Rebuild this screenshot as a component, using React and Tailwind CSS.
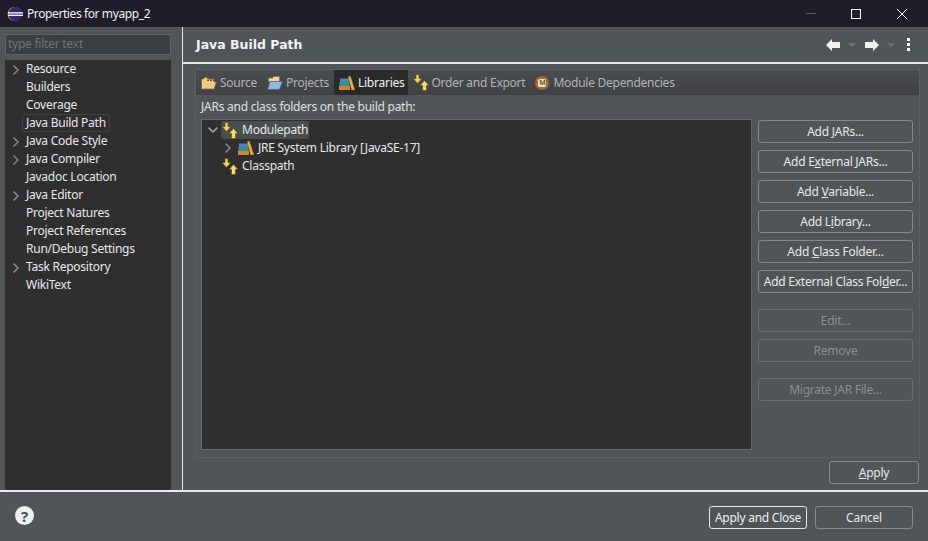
import { ChevronRight, ChevronDown } from "lucide-react";

const treeItems = [
  { label: "Resource", arrow: true },
  { label: "Builders" },
  { label: "Coverage" },
  { label: "Java Build Path", selected: true },
  { label: "Java Code Style", arrow: true },
  { label: "Java Compiler", arrow: true },
  { label: "Javadoc Location" },
  { label: "Java Editor", arrow: true },
  { label: "Project Natures" },
  { label: "Project References" },
  { label: "Run/Debug Settings" },
  { label: "Task Repository", arrow: true },
  { label: "WikiText" },
];

function EclipseLogo() {
  return (
    <svg width="16" height="16" viewBox="0 0 16 16">
      <circle cx="7.5" cy="8" r="7" fill="#e8922a" />
      <circle cx="8.5" cy="8" r="7" fill="#2f2a6b" />
      <rect x="1" y="6.200" width="15" height="1.400" fill="#f2f0f5" />
      <rect x="1" y="8.600" width="15" height="1.400" fill="#f2f0f5" />
    </svg>
  );
}

function PathIcon() {
  return (
    <svg width="16" height="17" viewBox="0 0 16 17" className="shrink-0">
      <path d="M3 .5h3v4h3L4.500 9.500 0 4.500h3z" fill="#f7cf5f" stroke="#5e4a18" strokeWidth="0.7" />
      <path d="M9.500 16.500v-5H7L11.500 6.500 16 11.500h-2.500v5z" fill="#fbd96d" stroke="#5e4a18" strokeWidth="0.7" />
    </svg>
  );
}

function LibraryIcon() {
  return (
    <svg width="16" height="16" viewBox="0 0 16 16" className="shrink-0">
      <rect x="0" y="11" width="11" height="4" fill="#d0843a" />
      <rect x="0.500" y="7" width="10" height="4" fill="#2f9490" />
      <rect x="1" y="3.500" width="9" height="3.500" fill="#5a7fb4" />
      <path d="M9 1.500l2.500-.5L16 15h-3.500z" fill="#e6b53e" stroke="#5e4a18" strokeWidth="0.4" />
    </svg>
  );
}

function SourceIcon() {
  return (
    <svg width="16" height="16" viewBox="0 0 16 16" className="shrink-0">
      <path d="M.500 14V4h2l1-1.500h3L7.500 4H13v3h2.500L13 14z" fill="#edcd86" stroke="#7f6430" strokeWidth="0.7" />
      <path d="M6 2h2v1.500H6zM9 2h2v1.500H9zM12 2h2v1.500h-2zM6 4.500h2V6H6zM9 4.500h2V6H9zM12 4.500h2V6h-2z" fill="#5f5136" />
    </svg>
  );
}

function ProjectIcon() {
  return (
    <svg width="16" height="16" viewBox="0 0 16 16" className="shrink-0">
      <path d="M1.500 7V3h4l1-1.500h6V7z" fill="#f1d68f" stroke="#7f6430" strokeWidth="0.7" />
      <path d="M.500 14.500l2.500-8h12.500l-3 8z" fill="#8fb8e4" stroke="#3f5f8c" strokeWidth="0.7" />
    </svg>
  );
}

function MavenIcon() {
  return (
    <span className="flex w-[16px] shrink-0 justify-center">
      <span className="flex h-[14px] w-[14px] items-center justify-center rounded-full bg-[#a8682c]">
        <span className="flex h-[8px] w-[8px] items-center justify-center rounded-[2px] bg-[#f4ead8] text-[7px] font-bold leading-none text-[#7d4a1c]">M</span>
      </span>
    </span>
  );
}

function Tab({ icon, label, active, className = "pr-[5px]" }) {
  return (
    <div className={`flex h-[25px] items-center gap-[3px] pl-[5px] ${className} ${active ? "bg-[#2a2a2a] text-[#f2f2f2]" : "text-[#b0b4b8]"}`}>
      {icon}
      <span>{label}</span>
    </div>
  );
}

function Btn({ children, disabled, strong, className = "" }) {
  const tone = disabled
    ? "border-[#6a6e71] text-[#8b8f92]"
    : strong
      ? "border-[#e4e6e8] text-[#eef0f2]"
      : "border-[#85898c] text-[#e6e8ea]";
  return (
    <div className={`flex h-[23px] items-center justify-center whitespace-nowrap rounded-[3px] border ${tone} ${className}`}>
      <span>{children}</span>
    </div>
  );
}

export default function App() {
  return (
    <div
      className="flex h-[541px] w-[928px] flex-col overflow-hidden bg-[#505558] text-[12px] leading-[18px] tracking-[-0.25px] text-[#e6e8ea]"
      style={{ fontFamily: '"Noto Sans", "Open Sans", sans-serif' }}
    >
      {/* Title bar */}
      <div className="flex h-[27px] shrink-0 items-center bg-[#1f1d29] pl-[7px] pr-[21px]">
        <EclipseLogo />
        <span className="ml-[4px] flex-1 tracking-[-0.4px] text-[#f0f0f0]">Properties for myapp_2</span>
        <div className="mr-[35px] h-px w-[10px] bg-[#5a5a62]" />
        <div className="mr-[36px] h-[10px] w-[10px] border border-white" />
        <svg width="10" height="10" viewBox="0 0 10 10">
          <path d="M0 0L10 10M10 0L0 10" stroke="#fff" strokeWidth="1" />
        </svg>
      </div>

      <div className="flex h-[463px] shrink-0">
        {/* Left pane */}
        <div className="flex w-[182px] shrink-0 flex-col pl-[5px] pt-[7px]">
          <div className="flex h-[21px] w-[166px] items-center border border-[#5f6366] bg-[#3b3e40] pb-[2px] pl-[2px] text-[#6f7376]">
            type filter text
          </div>
          <div className="mt-[5px] w-[166px] flex-1 bg-[#2f2f2f]">
            {treeItems.map((item) => (
              <div key={item.label} className="flex h-[18px] items-center">
                <span className="flex w-[21px] justify-center">
                  {item.arrow && <ChevronRight size={16} strokeWidth={2.4} className="mt-[2px] text-[#85888a]" />}
                </span>
                <span className={item.selected ? "-ml-[4px] rounded-[2px] border border-[#3f4244] pl-[3px] pr-[3px] leading-[16px]" : ""}>
                  {item.label}
                </span>
              </div>
            ))}
          </div>
        </div>
        <div className="w-px shrink-0 bg-[#e8e8e8]" />

        {/* Right pane */}
        <div className="flex min-w-0 flex-1 flex-col">
          <div className="flex h-[35px] shrink-0 items-center justify-between pl-[13px] pr-[18px]">
            <span className="text-[12.5px] font-bold tracking-normal text-[#f0f2f4]" style={{ fontFamily: '"DejaVu Sans", sans-serif' }}>
              Java Build Path
            </span>
            <div className="flex items-center">
              <svg width="14" height="12" viewBox="0 0 14 12"><path d="M0 6L6 0v3h8v6H6v3z" fill="#f2f2f2" /></svg>
              <svg width="8" height="4" viewBox="0 0 8 4" className="ml-[8px]"><path d="M0 0h8L4 4z" fill="#6d7174" /></svg>
              <svg width="14" height="12" viewBox="0 0 14 12" className="ml-[9px]"><path d="M14 6L8 0v3H0v6h8v3z" fill="#f2f2f2" /></svg>
              <svg width="8" height="4" viewBox="0 0 8 4" className="ml-[8px]"><path d="M0 0h8L4 4z" fill="#6d7174" /></svg>
              <div className="ml-[12px] flex flex-col gap-[2px]">
                <span className="h-[3px] w-[3px] bg-white" />
                <span className="h-[3px] w-[3px] bg-white" />
                <span className="h-[3px] w-[3px] bg-white" />
              </div>
            </div>
          </div>
          <div className="h-[2px] shrink-0 bg-[#e8e8e8]" />

          {/* Tab folder */}
          <div className="ml-[12px] mr-[8px] mt-[5px] flex h-[389px] shrink-0 flex-col border border-[#5c6063]">
            <div className="flex h-[25px] shrink-0 items-center bg-gradient-to-b from-[#4a4d50] to-[#3f4144]">
              <Tab icon={<SourceIcon />} label="Source" />
              <Tab icon={<ProjectIcon />} label="Projects" />
              <Tab icon={<LibraryIcon />} label="Libraries" active className="pr-[3px]" />
              <Tab icon={<PathIcon />} label="Order and Export" className="pr-[4px]" />
              <Tab icon={<MavenIcon />} label="Module Dependencies" />
            </div>
            <div className="flex min-h-0 flex-1 flex-col px-[5px]">
              <div className="flex h-[24px] shrink-0 items-center text-[#dfe1e3]">JARs and class folders on the build path:</div>
              <div className="flex gap-[6px]">
                <div className="h-[331px] w-[551px] shrink-0 border border-[#63676a] bg-[#2f2f2f] pt-[1px]">
                  <div className="flex h-[18px] items-center pl-[3px]">
                    <ChevronDown size={16} strokeWidth={2.4} className="text-[#a8abad]" />
                    <div className="flex h-[18px] items-center gap-[4px] rounded-[2px] bg-[#4a4d4f] pl-[1px] pr-[1px]">
                      <PathIcon />
                      <span>Modulepath</span>
                    </div>
                  </div>
                  <div className="flex h-[18px] items-center pl-[18px]">
                    <ChevronRight size={16} strokeWidth={2.4} className="text-[#85888a]" />
                    <span className="ml-[2px]"><LibraryIcon /></span>
                    <span className="ml-[4px]">JRE System Library [JavaSE-17]</span>
                  </div>
                  <div className="flex h-[18px] items-center gap-[4px] pl-[20px]">
                    <PathIcon />
                    <span>Classpath</span>
                  </div>
                </div>

                <div className="flex w-[155px] shrink-0 flex-col pt-[1px]">
                  <div className="flex flex-col gap-[7px]">
                    <Btn>Add <u>J</u>ARs...</Btn>
                    <Btn>Add E<u>x</u>ternal JARs...</Btn>
                    <Btn>Add <u>V</u>ariable...</Btn>
                    <Btn>Add L<u>i</u>brary...</Btn>
                    <Btn>Add <u>C</u>lass Folder...</Btn>
                    <Btn>Add External Class Fol<u>d</u>er...</Btn>
                  </div>
                  <div className="mt-[16px] flex flex-col gap-[7px]">
                    <Btn disabled>Edit...</Btn>
                    <Btn disabled>Remove</Btn>
                  </div>
                  <Btn disabled className="mt-[16px]">Migrate JAR File...</Btn>
                </div>
              </div>
            </div>
          </div>

          <div className="mr-[9px] mt-[3px] flex justify-end">
            <Btn className="w-[90px]"><u>A</u>pply</Btn>
          </div>
        </div>
      </div>

      <div className="h-[2px] shrink-0 bg-[#e8e8e8]" />

      {/* Footer */}
      <div className="flex flex-1 items-center justify-between pl-[15px] pr-[15px] pt-[2px]">
        <span className="-mt-[4px] flex h-[19px] w-[19px] items-center justify-center rounded-full bg-[#f0f0f0] text-[15px] font-bold text-[#44506e]">?</span>
        <div className="flex gap-[8px]">
          <Btn strong className="w-[98px]">Apply and Close</Btn>
          <Btn className="w-[98px]">Cancel</Btn>
        </div>
      </div>
    </div>
  );
}
